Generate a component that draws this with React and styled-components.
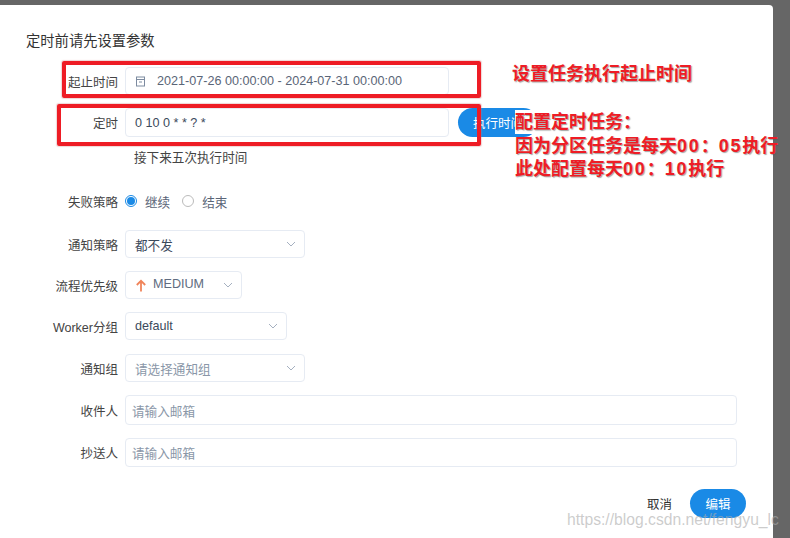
import { createGlobalStyle } from 'styled-components'
import styled from 'styled-components'

const GlobalStyle = createGlobalStyle`
  html, body {
    margin: 0;
    padding: 0;
    height: 538px;
    overflow: hidden;
    background: #666;
    font-family: "Liberation Sans", "Noto Sans CJK SC", sans-serif;
  }
`

const Page = styled.div`
  position: relative;
  width: 790px;
  height: 538px;
  overflow: hidden;
  background: #666;
`

const Modal = styled.div`
  width: 773px;
  height: 533px;
  margin-top: 5px;
  box-sizing: border-box;
  padding: 28px 36px 0 26px;
  background: #fff;
  border-top-right-radius: 4px;
  display: flex;
  flex-direction: column;
`

const Title = styled.div`
  font-size: 14.3px;
  line-height: 16px;
  color: #333;
  margin-bottom: 18px;
`

const Row = styled.div`
  display: flex;
  align-items: center;
  height: ${(p) => p.$h || 28}px;
  margin-bottom: ${(p) => p.$mb || 13}px;
`

const Label = styled.label`
  width: 92px;
  margin-right: 7px;
  flex: none;
  text-align: right;
  font-size: 12.5px;
  color: #444;
`

const Field = styled.div`
  box-sizing: border-box;
  height: 100%;
  width: ${(p) => p.$w ? `${p.$w}px` : '100%'};
  display: flex;
  align-items: center;
  justify-content: space-between;
  padding: 0 ${(p) => p.$pr ?? 7}px 0 ${(p) => p.$pl ?? 9}px;
  border: 1px solid #e6ebf3;
  border-radius: 4px;
  font-size: 12.6px;
  color: ${(p) => p.$muted ? '#8a97a8' : '#3c4a5c'};
`

const DateText = styled.span`
  margin-left: 11px;
  color: #5a6577;
`

const DateField = styled(Field)`
  justify-content: flex-start;
`

const Grow = styled.span`
  display: flex;
  align-items: center;
  gap: 6px;
`

const Medium = styled.span`
  color: #606c80;
  position: relative;
  top: -1px;
`

const ExecButton = styled.button`
  flex: none;
  width: 80px;
  height: 100%;
  margin-left: 9px;
  padding: 0;
  border: none;
  border-radius: 15px;
  background: #1a8ae6;
  color: #fff;
  font: inherit;
  font-size: 12.5px;
  text-align: center;
`

const Hint = styled.div`
  margin: -1px 0 25px 108px;
  font-size: 12.6px;
  line-height: 18px;
  color: #444;
`

const RadioRow = styled(Row)`
  height: 18px;
  margin-bottom: 20px;
`

const RadioItem = styled.span`
  display: inline-flex;
  align-items: center;
  gap: 8px;
  margin-right: 12px;
  font-size: 12.6px;
  color: #5a6577;
`

const RadioDot = styled.span`
  box-sizing: border-box;
  width: 12px;
  height: 12px;
  border-radius: 50%;
  border: 1px solid ${(p) => p.$on ? '#1a8ae6' : '#bbb'};
  display: flex;
  align-items: center;
  justify-content: center;
  &::after {
    content: '';
    display: ${(p) => p.$on ? 'block' : 'none'};
    width: 8px;
    height: 8px;
    border-radius: 50%;
    background: #1a8ae6;
  }
`

const Footer = styled.div`
  display: flex;
  align-items: center;
  justify-content: flex-end;
  gap: 18px;
  margin: 9px -9px 0 0;
  font-size: 12.5px;
  color: #333;
`

const Cancel = styled.span``

const EditButton = styled.button`
  width: 56px;
  height: 29px;
  padding: 0;
  border: none;
  border-radius: 15px;
  background: #1a8ae6;
  color: #fff;
  font: inherit;
`

const RedBox = styled.div`
  position: absolute;
  box-sizing: border-box;
  left: ${(p) => p.$x}px;
  top: ${(p) => p.$y}px;
  width: ${(p) => p.$w}px;
  height: ${(p) => p.$h}px;
  border: 4px solid #ee1c25;
  border-radius: 2px;
  box-shadow: 0 0 1px 1px rgba(200, 120, 120, 0.3);
`

const Note = styled.div`
  position: absolute;
  left: ${(p) => p.$x}px;
  top: ${(p) => p.$y}px;
  font-size: 18px;
  line-height: 24px;
  font-weight: 700;
  color: #ee1c25;
  white-space: nowrap;
  background: ${(p) => p.$bg ? '#fff' : 'transparent'};
  text-shadow: 1px 1px 1px rgba(90, 90, 90, 0.55);
`

const Digits = styled.span`
  letter-spacing: 1.8px;
`

const Watermark = styled.div`
  position: absolute;
  left: 567px;
  top: 511px;
  font-size: 15.7px;
  line-height: 18px;
  color: rgba(170, 170, 170, 0.6);
  white-space: nowrap;
`

const Chevron = () => (
  <svg width="12" height="12" viewBox="0 0 12 12" fill="none" stroke="#a5b0c0" strokeWidth="1">
    <path d="M2 4l4 4 4-4" />
  </svg>
)

const Calendar = () => (
  <svg width="11" height="11" viewBox="0 0 11 11" fill="none" stroke="#7d8ba0" strokeWidth="1">
    <rect x="1.5" y="1" width="8" height="9" />
    <path d="M1.5 3.5h8M4 6h3" />
  </svg>
)

const ArrowUp = () => (
  <svg width="12" height="13" viewBox="0 0 12 13" fill="none" stroke="#f0845a" strokeWidth="1.8">
    <path d="M6 12.5V2M1.8 6L6 1.8 10.2 6" />
  </svg>
)

const App = () => {
  return (
    <Page>
      <GlobalStyle />
      <Modal>
        <Title>定时前请先设置参数</Title>
        <Row>
          <Label>起止时间</Label>
          <DateField $w={324}>
            <Calendar />
            <DateText>2021-07-26 00:00:00 - 2024-07-31 00:00:00</DateText>
          </DateField>
        </Row>
        <Row $h={29}>
          <Label>定时</Label>
          <Field $w={324}>0 10 0 * * ? *</Field>
          <ExecButton>执行时间</ExecButton>
        </Row>
        <Hint>接下来五次执行时间</Hint>
        <RadioRow>
          <Label>失败策略</Label>
          <RadioItem><RadioDot $on />继续</RadioItem>
          <RadioItem><RadioDot />结束</RadioItem>
        </RadioRow>
        <Row>
          <Label>通知策略</Label>
          <Field $w={180}>都不发<Chevron /></Field>
        </Row>
        <Row>
          <Label>流程优先级</Label>
          <Field $w={117}>
            <Grow><ArrowUp /><Medium>MEDIUM</Medium></Grow>
            <Chevron />
          </Field>
        </Row>
        <Row $mb={14}>
          <Label>Worker分组</Label>
          <Field $w={162}>default<Chevron /></Field>
        </Row>
        <Row>
          <Label>通知组</Label>
          <Field $w={180} $muted>请选择通知组<Chevron /></Field>
        </Row>
        <Row $h={30}>
          <Label>收件人</Label>
          <Field $pl={6} $muted>请输入邮箱</Field>
        </Row>
        <Row $h={29}>
          <Label>抄送人</Label>
          <Field $pl={6} $muted>请输入邮箱</Field>
        </Row>
        <Footer>
          <Cancel>取消</Cancel>
          <EditButton>编辑</EditButton>
        </Footer>
      </Modal>

      <RedBox $x={62} $y={61} $w={419} $h={37} />
      <RedBox $x={57} $y={104} $w={424} $h={42} />
      <Note $x={512} $y={62}>设置任务执行起止时间</Note>
      <Note $x={515} $y={110} $bg>配置定时任务：</Note>
      <Note $x={515} $y={134}>因为分区任务是每天<Digits>00</Digits>：<Digits>05</Digits>执行</Note>
      <Note $x={515} $y={157}>此处配置每天<Digits>00</Digits>：<Digits>10</Digits>执行</Note>
      <Watermark>https://blog.csdn.net/fengyu_lc</Watermark>
    </Page>
  )
}

export default App
